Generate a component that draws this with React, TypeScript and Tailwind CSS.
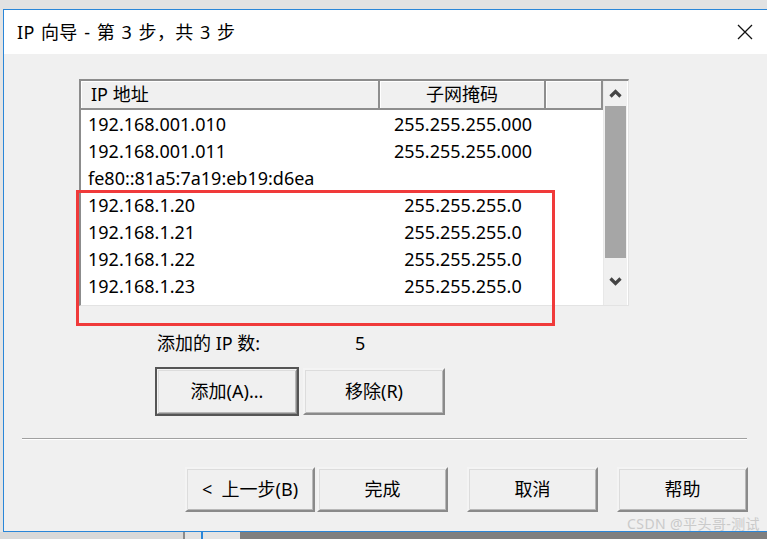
import type { ReactNode } from 'react';

const rows = [
  { ip: '192.168.001.010', mask: '255.255.255.000' },
  { ip: '192.168.001.011', mask: '255.255.255.000' },
  { ip: 'fe80::81a5:7a19:eb19:d6ea', mask: '' },
  { ip: '192.168.1.20', mask: '255.255.255.0' },
  { ip: '192.168.1.21', mask: '255.255.255.0' },
  { ip: '192.168.1.22', mask: '255.255.255.0' },
  { ip: '192.168.1.23', mask: '255.255.255.0' },
];

function Chevron({ up }: { up?: boolean }) {
  return (
    <svg width="13" height="9" viewBox="0 0 13 9">
      <polyline
        points={up ? '1.5,7.5 6.5,2.5 11.5,7.5' : '1.5,1.5 6.5,6.5 11.5,1.5'}
        fill="none"
        stroke="#444"
        strokeWidth="3.2"
      />
    </svg>
  );
}

function WinButton({ children, w, isDefault }: { children: ReactNode; w: string; isDefault?: boolean }) {
  return (
    <div
      className={`${w} flex h-full items-center justify-center border-2 border-t-[#f4f4f4] border-l-[#f4f4f4] border-r-[#8a8a8a] border-b-[#8a8a8a] bg-[#f0f0f0] text-[18px] text-black ${
        isDefault ? 'outline-2 outline-[#555555] -outline-offset-1' : ''
      } shadow-[inset_1px_1px_0_#dcdcdc,inset_-1px_-1px_0_#b8b8b8]`}
    >
      {children}
    </div>
  );
}

function HeaderCell({ children, w, center }: { children?: ReactNode; w: string; center?: boolean }) {
  return (
    <div
      className={`${w} flex h-full items-center border-r-2 border-r-[#8e8e8e] border-b-2 border-b-[#8e8e8e] bg-[#f0f0f0] shadow-[inset_1px_1px_0_#ffffff] ${
        center ? 'justify-center' : 'pl-[10px]'
      }`}
    >
      {children}
    </div>
  );
}

export default function App() {
  return (
    <div className="relative h-[539px] w-[767px] overflow-hidden bg-[#e4e4e4] font-['Noto_Sans','Noto_Sans_CJK_SC',sans-serif] text-[18px] text-black">
      {/* window behind, top strip */}
      <div className="h-[9px] bg-[#e2e2e2]" />

      {/* ===== DIALOG ===== */}
      <div className="ml-[3px] flex h-[523px] flex-col border-t border-b border-l border-[#2a86d8] bg-[#f0f0f0]">
        {/* title bar */}
        <div className="flex h-[44px] items-center justify-between bg-white pl-[13px] pr-[14px]">
          <span className="text-[18px] tracking-[0.3px] [word-spacing:1.5px]">IP 向导 - 第 3 步，共 3 步</span>
          <svg width="16" height="16" viewBox="0 0 16 16">
            <path d="M1 1 L15 15 M15 1 L1 15" stroke="#111" strokeWidth="1.3" />
          </svg>
        </div>

        {/* list view */}
        <div className="ml-[75px] mt-[25px] flex h-[227px] w-[550px] border-t-2 border-l-2 border-t-[#8c8c8c] border-l-[#8c8c8c] border-r border-b border-r-[#e3e3e3] border-b-[#e3e3e3] bg-white">
          <div className="flex w-[522px] flex-col">
            <div className="flex h-[29px] shrink-0">
              <HeaderCell w="w-[299px]">IP 地址</HeaderCell>
              <HeaderCell w="w-[166px]" center>
                子网掩码
              </HeaderCell>
              <HeaderCell w="w-[57px]" />
            </div>
            <div className="flex flex-col pt-[1px]">
              {rows.map((r) => (
                <div key={r.ip} className="flex h-[27px] items-center text-[18px]">
                  <div className="w-[299px] pl-[7px]">{r.ip}</div>
                  <div className="w-[166px] text-center">{r.mask}</div>
                </div>
              ))}
            </div>
          </div>
          {/* scrollbar */}
          <div className="flex w-[24px] flex-col border-l border-[#e8e8e8] bg-[#f0f0f0]">
            <div className="flex h-[25px] items-center justify-center">
              <Chevron up />
            </div>
            <div className="mx-[1px] h-[152px] bg-[#a6a6a6]" />
            <div className="flex flex-1 items-center justify-center">
              <Chevron />
            </div>
          </div>
        </div>

        {/* count */}
        <div className="ml-[153px] mt-[27px] flex h-[20px] items-center">
          <span className="w-[198px]">添加的 IP 数:</span>
          <span>5</span>
        </div>

        {/* add / remove */}
        <div className="ml-[152px] mt-[15px] flex h-[47px] gap-[5px]">
          <WinButton w="w-[142px]" isDefault>
            添加(A)...
          </WinButton>
          <WinButton w="w-[142px]">移除(R)</WinButton>
        </div>

        {/* separator */}
        <div className="ml-[18px] mt-[23px] h-[2px] w-[725px] border-t border-t-[#a0a0a0] border-b border-b-white" />

        {/* bottom buttons */}
        <div className="ml-[181px] mt-[27px] flex h-[45px]">
          <WinButton w="w-[130px]">&lt;&nbsp; 上一步(B)</WinButton>
          <div className="w-[2px]" />
          <WinButton w="w-[131px]">完成</WinButton>
          <div className="w-[19px]" />
          <WinButton w="w-[131px]">取消</WinButton>
          <div className="w-[19px]" />
          <WinButton w="w-[131px]">帮助</WinButton>
        </div>
      </div>

      {/* window behind, bottom strip */}
      <div className="flex h-[7px]">
        <div className="w-[183px] bg-[#d9d9d9]" />
        <div className="w-[2px] bg-[#8a8a8a]" />
        <div className="w-[16px] bg-[#e2e2e2]" />
        <div className="w-[2px] bg-[#2a86d8]" />
        <div className="w-[37px] bg-[#e4e4e4]" />
        <div className="flex-1 bg-[#7f7f7f]" />
      </div>

      {/* red highlight annotation */}
      <div className="absolute left-[76px] top-[190px] h-[136px] w-[479px] border-[3px] border-[#f03a3a]" />

      {/* watermark */}
      <div className="absolute right-[7px] top-[513px] text-[14px] tracking-[0.4px] text-[#cacaca]">
        CSDN @平头哥-测试
      </div>
    </div>
  );
}
